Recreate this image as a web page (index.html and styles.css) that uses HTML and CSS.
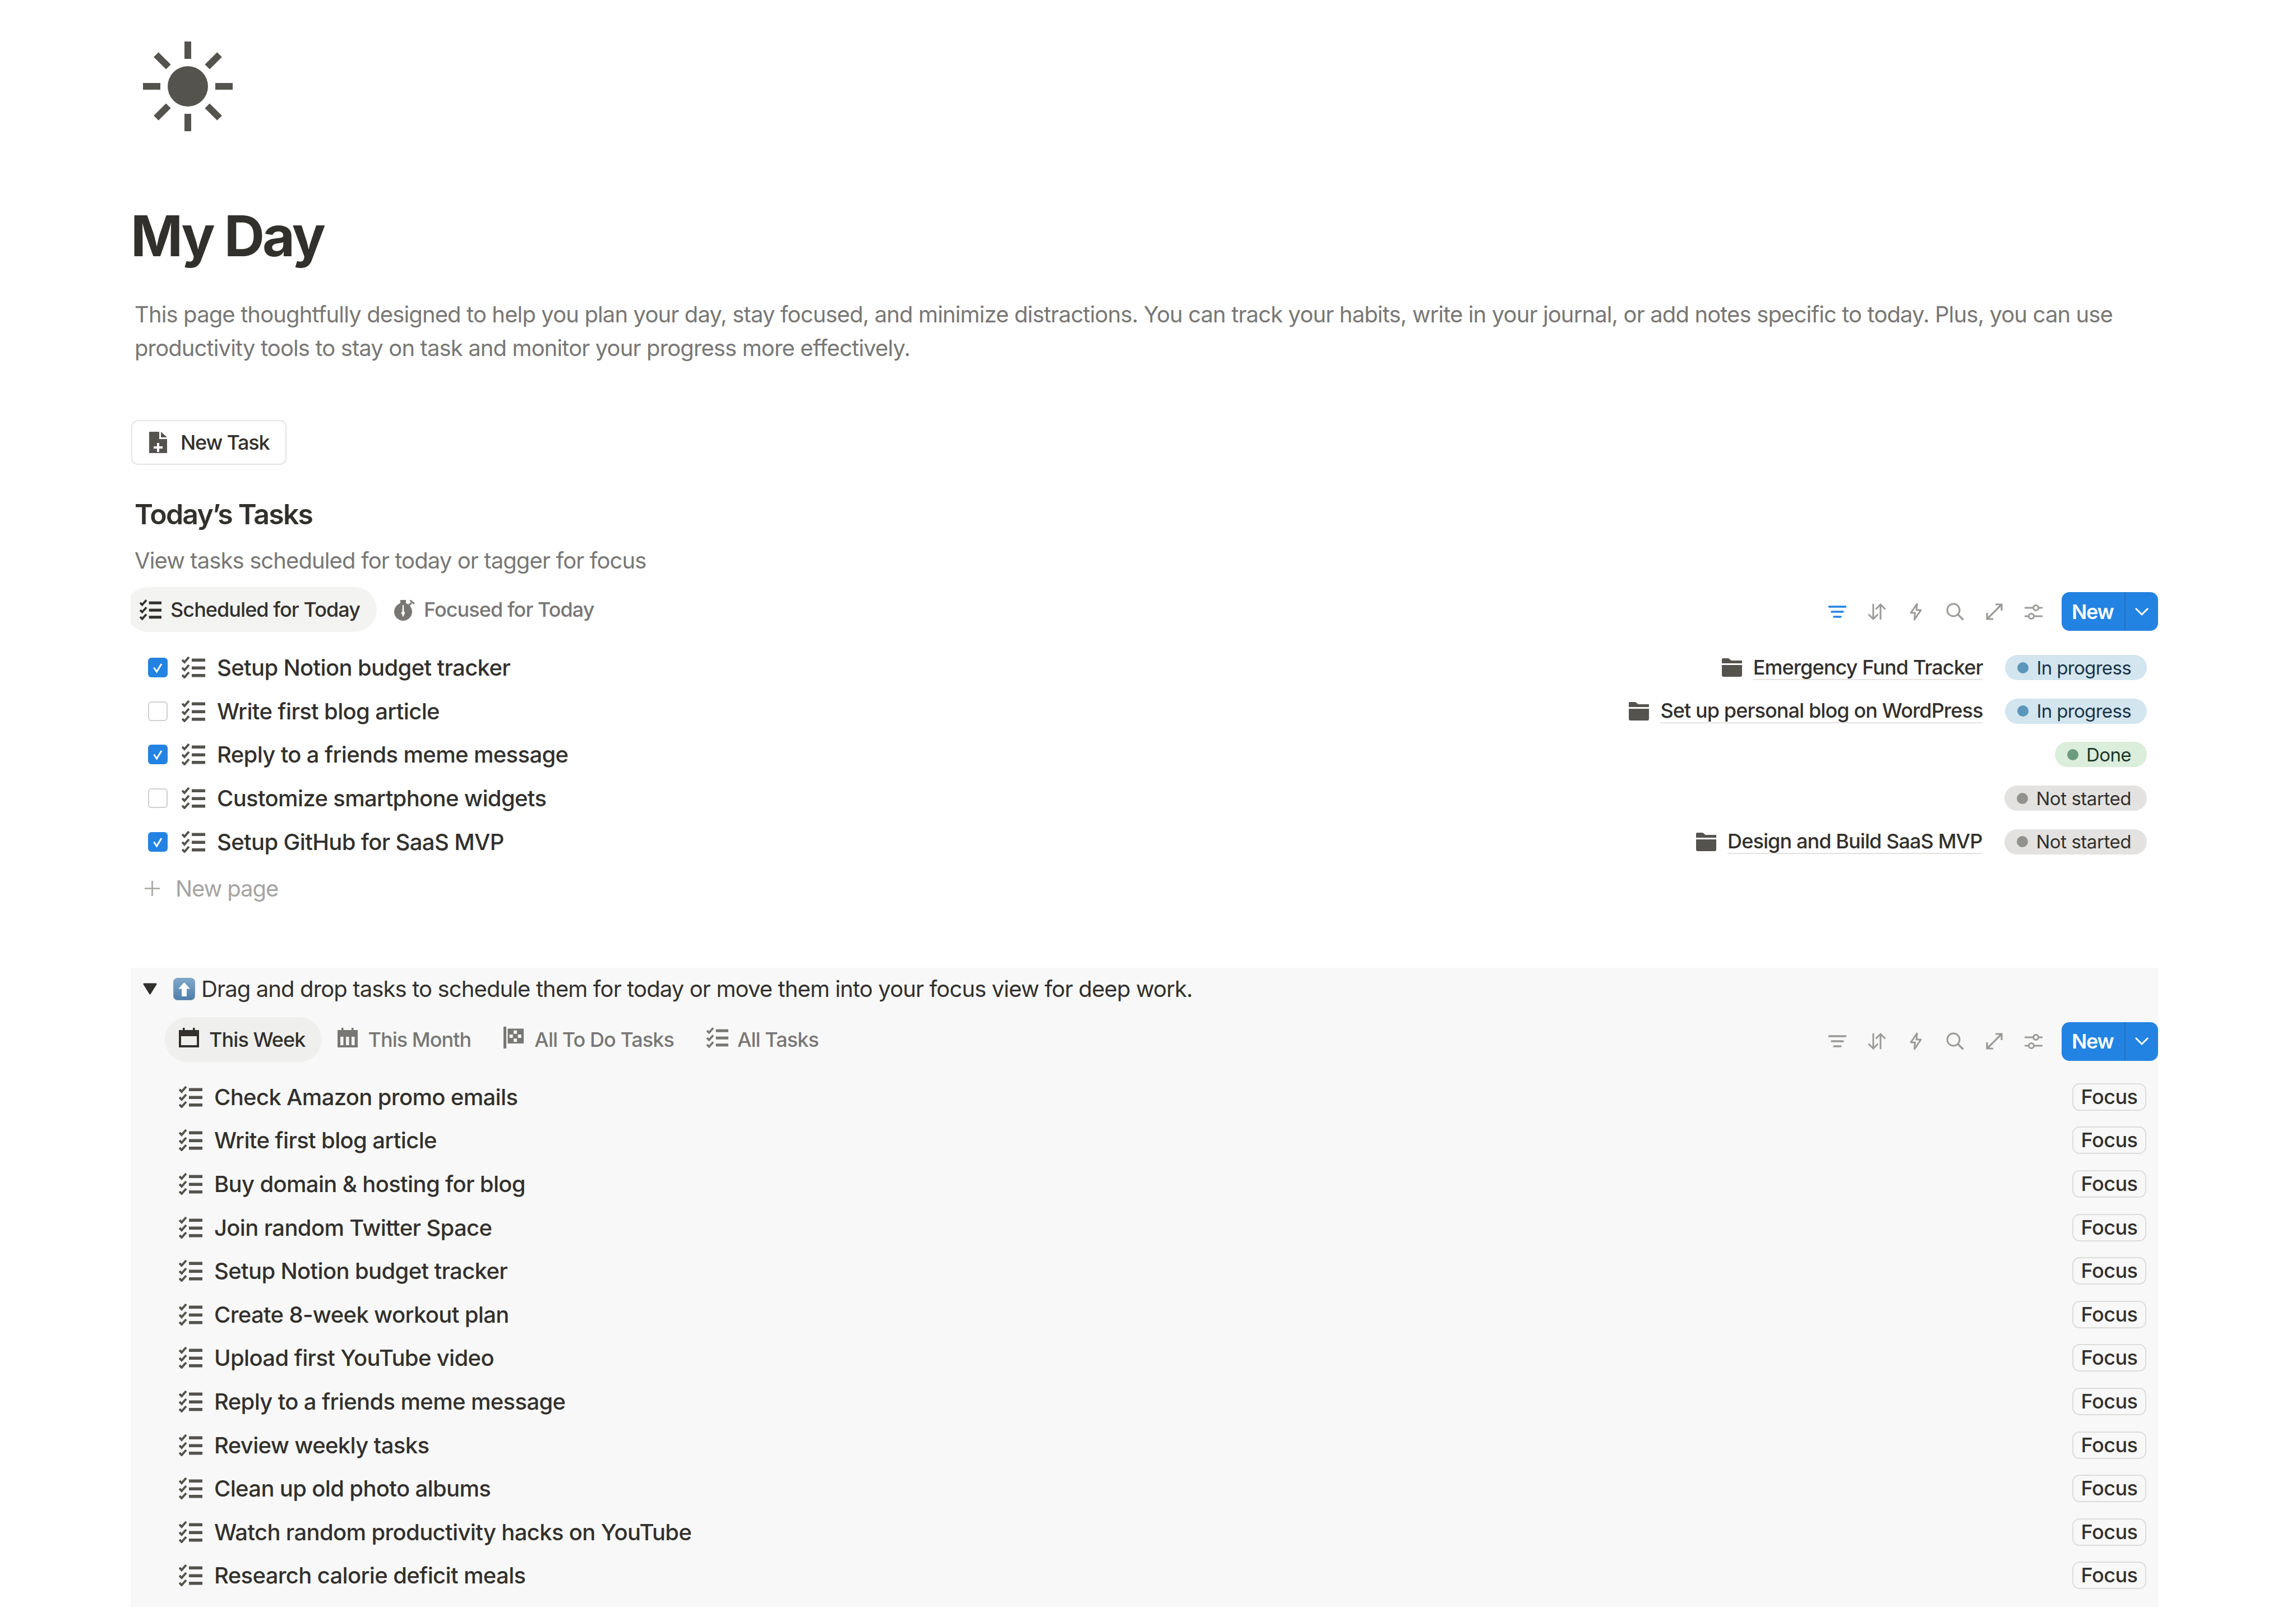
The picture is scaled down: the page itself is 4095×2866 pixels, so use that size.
FILE: index.html
```html
<!DOCTYPE html>
<html lang="en">
<head>
  <meta charset="UTF-8" />
  <title>My Day</title>
  <link rel="stylesheet" href="styles.css">
</head>

<body>
  <svg class="sprite" xmlns="http://www.w3.org/2000/svg">
    <symbol id="i-tasks" viewBox="0 0 42 39">
      <path d="M1 6l4 4 8-9M1 20l4 4 8-9M1 33l4 4 8-9" fill="none" stroke="currentColor" stroke-width="4"/>
      <rect x="18" y="3.500" width="24" height="5.500"/>
      <rect x="18" y="17.500" width="24" height="5.500"/>
      <rect x="18" y="31" width="24" height="5.500"/>
    </symbol>
    <symbol id="i-folder" viewBox="0 0 36 33">
      <path d="M0 2a2 2 0 0 1 2-2h8.500c1.500 0 2.500 .6 3.500 1.500L16.500 4H36v5H0z"/>
      <path d="M0 12h36v18a3 3 0 0 1-3 3H3a3 3 0 0 1-3-3z"/>
    </symbol>
    <symbol id="i-timer" viewBox="0 -2 39 39">
      <rect x="11" y="0" width="10" height="6"/>
      <path d="M23 10l7-6 2 2.500-7 6z"/>
      <path d="M27.500 1.500l2-2 7.500 6.500-2 2z"/>
      <path fill-rule="evenodd" d="M16 5a16 16 0 1 1 0 32 16 16 0 0 1 0-32zM15 9l-.5 11.500-2 3 2 3 .5 3h2l.5-3 2-3-2-3L17 9z"/>
    </symbol>
    <symbol id="i-filter" viewBox="0 0 32 22">
      <path d="M1 2h30M6 11h20M10 20h12" fill="none" stroke="currentColor" stroke-width="3.600" stroke-linecap="round"/>
    </symbol>
    <symbol id="i-sort" viewBox="0 0 32 30">
      <path d="M10 1v27M1.500 19.500L10 28l8.500-8.500M23 29V2M14.500 10.500L23 2l8.500 8.500" fill="none" stroke="currentColor" stroke-width="3"/>
    </symbol>
    <symbol id="i-bolt" viewBox="0 0 22 32">
      <path d="M13 2L2 18h7.500L8.500 30 20 13h-8z" fill="none" stroke="currentColor" stroke-width="3" stroke-linejoin="round"/>
    </symbol>
    <symbol id="i-search" viewBox="0 0 32 32">
      <circle cx="13" cy="13" r="11" fill="none" stroke="currentColor" stroke-width="3"/>
      <path d="M21 21l9.500 9.500" fill="none" stroke="currentColor" stroke-width="3.400"/>
    </symbol>
    <symbol id="i-expand" viewBox="0 0 32 32">
      <path d="M18 3h11v11M29 3L3 29M3 18v11h11" fill="none" stroke="currentColor" stroke-width="3.200"/>
    </symbol>
    <symbol id="i-sliders" viewBox="0 0 32 30">
      <path d="M1 8h14M25 8h6M1 23h6M17 23h14" fill="none" stroke="currentColor" stroke-width="3.200" stroke-linecap="round"/>
      <circle cx="20" cy="8" r="4.500" fill="none" stroke="currentColor" stroke-width="3"/>
      <circle cx="12" cy="23" r="4.500" fill="none" stroke="currentColor" stroke-width="3"/>
    </symbol>
    <symbol id="i-week" viewBox="0 0 36 35">
      <rect x="7" y="0" width="3.500" height="6"/>
      <rect x="25" y="0" width="3.500" height="6"/>
      <path fill-rule="evenodd" d="M0 4h36v31H0zM4 15v16h28V15z"/>
    </symbol>
    <symbol id="i-month" viewBox="0 0 36 35">
      <rect x="7" y="0" width="3.500" height="6"/>
      <rect x="25" y="0" width="3.500" height="6"/>
      <path fill-rule="evenodd" d="M0 4h36v31H0zM5 16v15h5.500V16zM15 16v15h5.500V16zM25 16v15h5.500V16z"/>
    </symbol>
    <symbol id="i-gallery" viewBox="0 0 39 39">
      <rect x="0" y="0" width="5" height="39"/>
      <path fill-rule="evenodd" d="M7.500 3.500H36V30H7.500zM18 6.700v6h6v-6zM10.700 14v6h6v-6zM25.700 14v6h6v-6zM18 21.300v6h6v-6z"/>
    </symbol>
    <symbol id="i-doc" viewBox="0 0 32 38">
      <path fill-rule="evenodd" d="M0 0h18v13h14v25H0zM14 20v6H8v4h6v6h4v-6h6v-4h-6v-6z"/>
      <path d="M21 0l11 10H21z"/>
    </symbol>
    <symbol id="i-check" viewBox="0 0 35 35">
      <path d="M10.500 17.500l5 7.500 8.500-14" fill="none" stroke="#fff" stroke-width="3"/>
    </symbol>
    <linearGradient id="emoji-fill" x1="0" y1="0" x2="0" y2="1">
      <stop offset="0" stop-color="#7fa8cc"/>
      <stop offset="1" stop-color="#4f7da8"/>
    </linearGradient>
  </svg>

  <div class="page">
    <svg class="sun" viewBox="0 0 160 160">
      <circle cx="80" cy="80" r="36"/>
      <rect x="74" y="0" width="12" height="31"/>
      <rect x="74" y="0" width="12" height="31" transform="rotate(45 80 80)"/>
      <rect x="74" y="0" width="12" height="31" transform="rotate(90 80 80)"/>
      <rect x="74" y="0" width="12" height="31" transform="rotate(135 80 80)"/>
      <rect x="74" y="0" width="12" height="31" transform="rotate(180 80 80)"/>
      <rect x="74" y="0" width="12" height="31" transform="rotate(225 80 80)"/>
      <rect x="74" y="0" width="12" height="31" transform="rotate(270 80 80)"/>
      <rect x="74" y="0" width="12" height="31" transform="rotate(315 80 80)"/>
    </svg>

    <h1 class="title">My Day</h1>
    <p class="intro">This page thoughtfully designed to help you plan your day, stay focused, and minimize distractions. You can track your habits, write in your journal, or add notes specific to today. Plus, you can use productivity tools to stay on task and monitor your progress more effectively.</p>

    <div class="new-task"><svg class="doc-icon"><use href="#i-doc"/></svg>New Task</div>

    <h3 class="heading">Today’s Tasks</h3>
    <p class="subtext">View tasks scheduled for today or tagger for focus</p>

    <div class="view-bar first">
      <div class="tabs">
        <div class="tab active"><svg class="tab-icon"><use href="#i-tasks"/></svg>Scheduled for Today</div>
        <div class="tab"><svg class="tab-icon timer"><use href="#i-timer"/></svg>Focused for Today</div>
      </div>
      <div class="tools">
        <svg class="tool filter-on"><use href="#i-filter"/></svg>
        <svg class="tool"><use href="#i-sort"/></svg>
        <svg class="tool"><use href="#i-bolt"/></svg>
        <svg class="tool"><use href="#i-search"/></svg>
        <svg class="tool"><use href="#i-expand"/></svg>
        <svg class="tool"><use href="#i-sliders"/></svg>
        <div class="new-btn">
          <span class="new-label">New</span>
          <span class="new-arrow"><svg viewBox="0 0 26 16"><path d="M2 2l11 11L24 2" fill="none" stroke="#fff" stroke-width="3"/></svg></span>
        </div>
      </div>
    </div>

    <div class="task-list">
      <div class="task">
        <span class="box checked"><svg><use href="#i-check"/></svg></span>
        <svg class="task-icon"><use href="#i-tasks"/></svg>
        <span class="task-name">Setup Notion budget tracker</span>
        <span class="relation"><svg class="folder"><use href="#i-folder"/></svg><span class="rel-name">Emergency Fund Tracker</span></span>
        <span class="status blue">In progress</span>
      </div>
      <div class="task">
        <span class="box"></span>
        <svg class="task-icon"><use href="#i-tasks"/></svg>
        <span class="task-name">Write first blog article</span>
        <span class="relation"><svg class="folder"><use href="#i-folder"/></svg><span class="rel-name">Set up personal blog on WordPress</span></span>
        <span class="status blue">In progress</span>
      </div>
      <div class="task">
        <span class="box checked"><svg><use href="#i-check"/></svg></span>
        <svg class="task-icon"><use href="#i-tasks"/></svg>
        <span class="task-name">Reply to a friends meme message</span>
        <span class="status green">Done</span>
      </div>
      <div class="task">
        <span class="box"></span>
        <svg class="task-icon"><use href="#i-tasks"/></svg>
        <span class="task-name">Customize smartphone widgets</span>
        <span class="status grey">Not started</span>
      </div>
      <div class="task">
        <span class="box checked"><svg><use href="#i-check"/></svg></span>
        <svg class="task-icon"><use href="#i-tasks"/></svg>
        <span class="task-name">Setup GitHub for SaaS MVP</span>
        <span class="relation"><svg class="folder"><use href="#i-folder"/></svg><span class="rel-name">Design and Build SaaS MVP</span></span>
        <span class="status grey">Not started</span>
      </div>
      <div class="new-page"><svg class="plus" viewBox="0 0 27 27"><path d="M13.500 0v27M0 13.500h27" fill="none" stroke="currentColor" stroke-width="2.600"/></svg>New page</div>
    </div>

    <div class="toggle-block">
      <div class="toggle-head">
        <svg class="triangle" viewBox="0 0 25 21"><path d="M2 2h21L12.500 19z" stroke-width="3" stroke="currentColor" stroke-linejoin="round"/></svg>
        <svg class="emoji" viewBox="0 0 39 40">
          <rect x=".5" y=".5" width="38" height="39" rx="7" fill="url(#emoji-fill)" stroke="#7d9dbd"/>
          <path d="M19.500 8L30 19.500h-6V33h-9V19.500H9z" fill="#fff"/>
        </svg>
        <span>Drag and drop tasks to schedule them for today or move them into your focus view for deep work.</span>
      </div>

      <div class="view-bar second">
        <div class="tabs">
          <div class="tab active"><svg class="tab-icon small"><use href="#i-week"/></svg>This Week</div>
          <div class="tab"><svg class="tab-icon small"><use href="#i-month"/></svg>This Month</div>
          <div class="tab"><svg class="tab-icon small tall"><use href="#i-gallery"/></svg>All To Do Tasks</div>
          <div class="tab"><svg class="tab-icon small tall"><use href="#i-tasks"/></svg>All Tasks</div>
        </div>
        <div class="tools">
          <svg class="tool"><use href="#i-filter"/></svg>
          <svg class="tool"><use href="#i-sort"/></svg>
          <svg class="tool"><use href="#i-bolt"/></svg>
          <svg class="tool"><use href="#i-search"/></svg>
          <svg class="tool"><use href="#i-expand"/></svg>
          <svg class="tool"><use href="#i-sliders"/></svg>
          <div class="new-btn">
            <span class="new-label">New</span>
            <span class="new-arrow"><svg viewBox="0 0 26 16"><path d="M2 2l11 11L24 2" fill="none" stroke="#fff" stroke-width="3"/></svg></span>
          </div>
        </div>
      </div>

      <div class="focus-list">
        <div class="task"><svg class="task-icon"><use href="#i-tasks"/></svg><span class="task-name">Check Amazon promo emails</span><span class="focus-btn">Focus</span></div>
        <div class="task"><svg class="task-icon"><use href="#i-tasks"/></svg><span class="task-name">Write first blog article</span><span class="focus-btn">Focus</span></div>
        <div class="task"><svg class="task-icon"><use href="#i-tasks"/></svg><span class="task-name">Buy domain &amp; hosting for blog</span><span class="focus-btn">Focus</span></div>
        <div class="task"><svg class="task-icon"><use href="#i-tasks"/></svg><span class="task-name">Join random Twitter Space</span><span class="focus-btn">Focus</span></div>
        <div class="task"><svg class="task-icon"><use href="#i-tasks"/></svg><span class="task-name">Setup Notion budget tracker</span><span class="focus-btn">Focus</span></div>
        <div class="task"><svg class="task-icon"><use href="#i-tasks"/></svg><span class="task-name">Create 8-week workout plan</span><span class="focus-btn">Focus</span></div>
        <div class="task"><svg class="task-icon"><use href="#i-tasks"/></svg><span class="task-name">Upload first YouTube video</span><span class="focus-btn">Focus</span></div>
        <div class="task"><svg class="task-icon"><use href="#i-tasks"/></svg><span class="task-name">Reply to a friends meme message</span><span class="focus-btn">Focus</span></div>
        <div class="task"><svg class="task-icon"><use href="#i-tasks"/></svg><span class="task-name">Review weekly tasks</span><span class="focus-btn">Focus</span></div>
        <div class="task"><svg class="task-icon"><use href="#i-tasks"/></svg><span class="task-name">Clean up old photo albums</span><span class="focus-btn">Focus</span></div>
        <div class="task"><svg class="task-icon"><use href="#i-tasks"/></svg><span class="task-name">Watch random productivity hacks on YouTube</span><span class="focus-btn">Focus</span></div>
        <div class="task"><svg class="task-icon"><use href="#i-tasks"/></svg><span class="task-name">Research calorie deficit meals</span><span class="focus-btn">Focus</span></div>
      </div>
    </div>
  </div>
</body>
</html>
```

FILE: styles.css
```css
html, body {
  margin: 0;
  height: 100%;
  background-color: #fff;
  font-family: Inter, "Noto Sans", sans-serif;
  color: #32302c;
  overflow: hidden;
}

.sprite {
  position: absolute;
  width: 0;
  height: 0;
}

.page {
  display: flex;
  flex-direction: column;
  width: 3616px;
  height: 2866px;
  margin-left: 233px;
  overflow: hidden;
}

.sun {
  flex: none;
  width: 160px;
  height: 160px;
  margin: 74px 0 0 22px;
  fill: #55534e;
}

.title {
  margin: 127px 0 0;
  font-size: 100px;
  line-height: 120px;
  font-weight: 700;
  letter-spacing: -3.8px;
}

.intro {
  margin: 50px 0 0;
  padding-left: 7px;
  font-size: 40px;
  line-height: 60px;
  letter-spacing: -0.88px;
  color: #787774;
}

.new-task {
  display: flex;
  align-items: center;
  box-sizing: border-box;
  align-self: flex-start;
  height: 80px;
  margin-top: 98px;
  margin-left: 1px;
  padding: 0 29px 0 30px;
  border: 2.5px solid #e3e3e1;
  border-radius: 12px;
  font-size: 36px;
  font-weight: 500;
  letter-spacing: -1.2px;
}

.doc-icon {
  width: 32px;
  height: 38px;
  margin-right: 24px;
  fill: #55534e;
}

.heading {
  margin: 58px 0 0;
  padding-left: 7px;
  font-size: 50px;
  line-height: 60px;
  font-weight: 600;
  letter-spacing: -1.8px;
}

.subtext {
  margin: 23px 0 0;
  padding-left: 7px;
  font-size: 40px;
  line-height: 60px;
  letter-spacing: -0.9px;
  color: #787774;
}

.view-bar {
  display: flex;
  justify-content: space-between;
  align-items: center;
  height: 80px;
}

.view-bar.first {
  margin: 17px 0 0 -9px;
}

.view-bar.second {
  margin: 20px 0 0 61px;
}

.tabs {
  display: flex;
  align-items: center;
  gap: 3px;
}

.tab {
  display: flex;
  align-items: center;
  height: 80px;
  padding: 0 30px 0 25px;
  border-radius: 40px;
  font-size: 36px;
  font-weight: 500;
  letter-spacing: -0.95px;
  color: #787774;
  fill: #787774;
}

.tab.active {
  color: #32302c;
  fill: #32302c;
  background-color: #f3f3f2;
}

.second .tab.active {
  background-color: #efefed;
}

.tab-icon {
  width: 39px;
  height: 39px;
  margin-right: 16px;
}

.tab-icon.timer {
  margin-left: 3px;
  margin-right: 14px;
}

.tab-icon.small {
  width: 36px;
  height: 35px;
  margin-right: 18px;
  margin-top: -6px;
}

.tab-icon.tall {
  width: 39px;
  height: 39px;
  margin-right: 16px;
}

.tools {
  display: flex;
  align-items: center;
  padding-top: 7px;
}

.tool {
  width: 32px;
  height: 32px;
  margin-right: 38px;
  color: #9b9a97;
  fill: #9b9a97;
}

.tool.filter-on {
  color: #2383e2;
}

.new-btn {
  display: flex;
  align-items: stretch;
  height: 69px;
  margin-left: -4px;
  border-radius: 14px;
  background-color: #2383e2;
  color: #fff;
  font-size: 36px;
  font-weight: 600;
  letter-spacing: -1.3px;
}

.new-label {
  display: flex;
  align-items: center;
  width: 114px;
  padding-left: 18px;
  box-sizing: border-box;
  border-right: 2px solid #1f70c1;
}

.new-arrow {
  display: flex;
  align-items: center;
  justify-content: center;
  width: 58px;
}

.new-arrow svg {
  width: 26px;
  height: 16px;
}

.task-list {
  margin-top: 25px;
}

.task {
  display: flex;
  align-items: center;
  height: 77.6px;
  padding-left: 31px;
  padding-right: 20px;
}

.task-name {
  flex: 1;
  font-size: 40px;
  font-weight: 500;
  letter-spacing: -0.65px;
}

.box {
  flex: none;
  box-sizing: border-box;
  width: 35px;
  height: 35px;
  margin-right: 25px;
  border: 2.5px solid #cfcfcd;
  border-radius: 6px;
}

.box.checked {
  border: none;
  background-color: #2383e2;
}

.box svg {
  display: block;
  width: 35px;
  height: 35px;
}

.task-icon {
  flex: none;
  width: 42px;
  height: 39px;
  margin-right: 21px;
  color: #55534e;
  fill: #55534e;
}

.relation {
  display: flex;
  align-items: center;
  margin-right: 40px;
  font-size: 36px;
  font-weight: 500;
  letter-spacing: -0.9px;
}

.folder {
  width: 36px;
  height: 33px;
  margin-right: 20px;
  fill: #55534e;
}

.rel-name {
  border-bottom: 2.5px solid #e3e2e0;
  line-height: 42px;
}

.status {
  display: flex;
  align-items: center;
  box-sizing: border-box;
  height: 45px;
  padding: 0 28px 0 22px;
  border-radius: 23px;
  font-size: 33px;
  font-weight: 400;
  letter-spacing: -0.45px;
}

.status::before {
  content: "";
  width: 20px;
  height: 20px;
  margin-right: 14px;
  border-radius: 50%;
}

.status.blue {
  background-color: #d3e5ef;
  color: #183347;
  letter-spacing: -0.65px;
}

.status.blue::before {
  background-color: #5b97bd;
}

.status.green {
  background-color: #dbeddb;
  color: #1c3829;
  letter-spacing: -0.6px;
}

.status.green::before {
  background-color: #6c9b7d;
}

.status.grey {
  background-color: #e3e2e0;
  color: #32302c;
}

.status.grey::before {
  background-color: #91918e;
}

.new-page {
  display: flex;
  align-items: center;
  height: 77.6px;
  margin-top: 6px;
  padding-left: 25px;
  font-size: 40px;
  letter-spacing: -1.1px;
  color: #a5a4a1;
}

.plus {
  width: 27px;
  height: 27px;
  margin-right: 28px;
}

.toggle-block {
  flex: 1;
  margin-top: 102px;
  padding-top: 8px;
  background-color: #f8f8f8;
}

.toggle-head {
  display: flex;
  align-items: center;
  height: 60px;
  padding-left: 22px;
  font-size: 40px;
  letter-spacing: -0.88px;
}

.triangle {
  width: 25px;
  height: 21px;
  margin-right: 29px;
  color: #32302c;
  fill: #32302c;
}

.emoji {
  width: 39px;
  height: 40px;
  margin-right: 11px;
}

.focus-list {
  margin-top: 24px;
}

.focus-list .task {
  padding-left: 86px;
  padding-right: 21px;
}

.focus-btn {
  box-sizing: border-box;
  width: 132px;
  height: 49px;
  border: 2.5px solid #dcdcda;
  border-radius: 13px;
  font-size: 36px;
  font-weight: 500;
  letter-spacing: -0.5px;
  line-height: 44px;
  text-align: center;
}
```
